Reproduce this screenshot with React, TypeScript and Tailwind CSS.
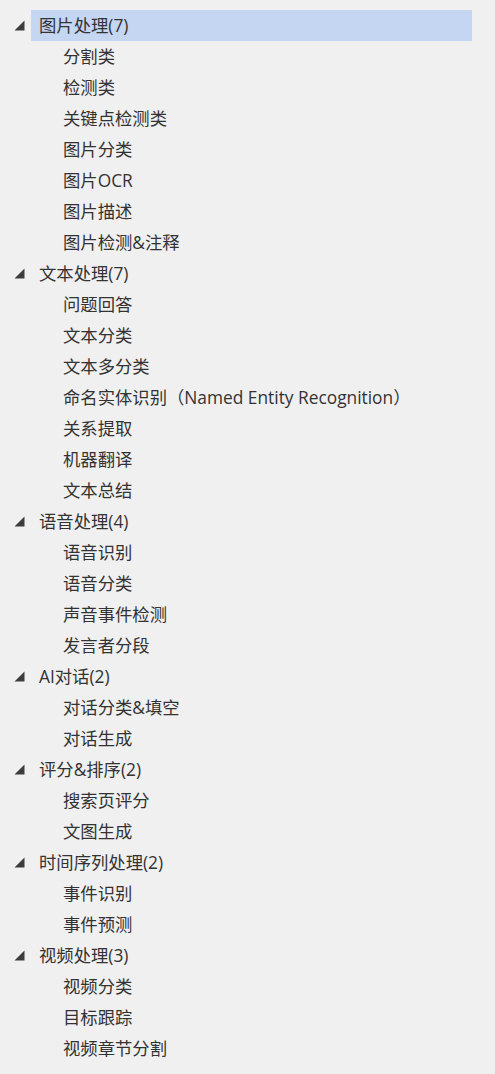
const groups: { title: string; items: string[] }[] = [
  { title: '图片处理(7)', items: ['分割类', '检测类', '关键点检测类', '图片分类', '图片OCR', '图片描述', '图片检测&注释'] },
  {
    title: '文本处理(7)',
    items: ['问题回答', '文本分类', '文本多分类', '命名实体识别（Named Entity Recognition）', '关系提取', '机器翻译', '文本总结'],
  },
  { title: '语音处理(4)', items: ['语音识别', '语音分类', '声音事件检测', '发言者分段'] },
  { title: 'AI对话(2)', items: ['对话分类&填空', '对话生成'] },
  { title: '评分&排序(2)', items: ['搜索页评分', '文图生成'] },
  { title: '时间序列处理(2)', items: ['事件识别', '事件预测'] },
  { title: '视频处理(3)', items: ['视频分类', '目标跟踪', '视频章节分割'] },
];

function Arrow() {
  return (
    <svg width="11" height="11" viewBox="0 0 11 11" className="block">
      <polygon points="10.5,0.5 10.5,10.5 0.5,10.5" fill="#3c3c3c" />
    </svg>
  );
}

export default function App() {
  return (
    <div
      className="w-[495px] h-[1074px] bg-[#f0f0f0] pt-[10px] text-[17.33px] leading-none text-[#333333] overflow-hidden"
      style={{ fontFamily: '"Open Sans", "Noto Sans CJK SC", sans-serif' }}
    >
      {groups.map((g, gi) => (
        <div key={g.title}>
          {/* 分组标题 */}
          <div className="flex h-[31px] items-center">
            <div className="w-[31px] h-full flex items-center pl-[14px]">
              <Arrow />
            </div>
            <div
              className={`w-[441px] h-full flex items-center pl-[8px] whitespace-nowrap ${
                gi === 0 ? 'bg-[#c4d6f2]' : ''
              }`}
            >
              {g.title}
            </div>
          </div>
          {g.items.map((it) => (
            <div key={it} className="flex h-[31px] items-center pl-[63px] whitespace-nowrap">
              {it}
            </div>
          ))}
        </div>
      ))}
    </div>
  );
}
